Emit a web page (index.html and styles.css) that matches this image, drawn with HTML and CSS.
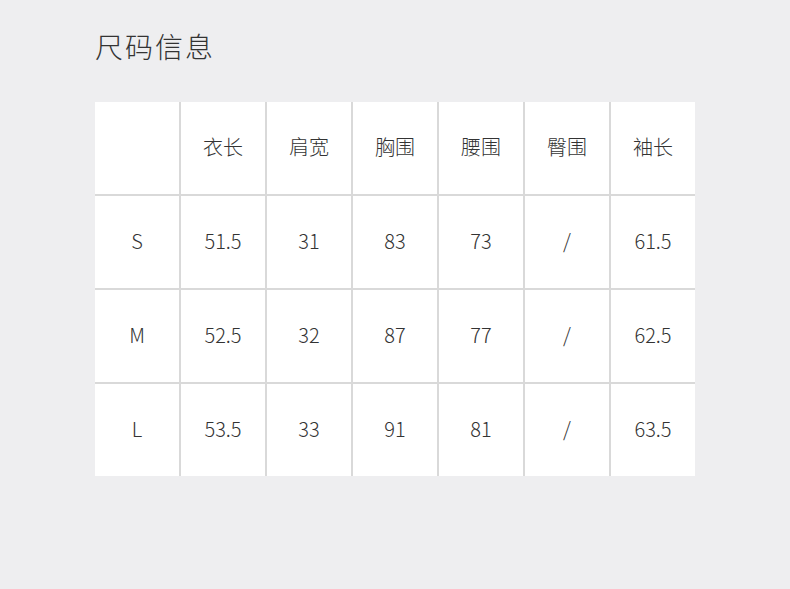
FILE: index.html
```html
<!DOCTYPE html>
<html lang="zh-CN">
<head>
<meta charset="utf-8">
<title>尺码信息</title>
<link rel="stylesheet" href="styles.css">
</head>
<body>
<div class="page">
  <h1 class="title">尺码信息</h1>
  <div class="size-table">
    <div class="cell"></div>
    <div class="cell">衣长</div>
    <div class="cell">肩宽</div>
    <div class="cell">胸围</div>
    <div class="cell">腰围</div>
    <div class="cell">臀围</div>
    <div class="cell">袖长</div>

    <div class="cell">S</div>
    <div class="cell">51.5</div>
    <div class="cell">31</div>
    <div class="cell">83</div>
    <div class="cell">73</div>
    <div class="cell">/</div>
    <div class="cell">61.5</div>

    <div class="cell">M</div>
    <div class="cell">52.5</div>
    <div class="cell">32</div>
    <div class="cell">87</div>
    <div class="cell">77</div>
    <div class="cell">/</div>
    <div class="cell">62.5</div>

    <div class="cell">L</div>
    <div class="cell">53.5</div>
    <div class="cell">33</div>
    <div class="cell">91</div>
    <div class="cell">81</div>
    <div class="cell">/</div>
    <div class="cell">63.5</div>
  </div>
</div>
</body>
</html>
```
FILE: styles.css
```css
html, body {
  margin: 0;
  padding: 0;
  background: #eeeef0;
}
body {
  font-family: "Noto Sans CJK SC", "Noto Sans", sans-serif;
  color: #333333;
}
.page {
  padding: 26px 0 0 95px;
}
.title {
  margin: 0;
  font-size: 28px;
  font-weight: 300;
  line-height: 40px;
  letter-spacing: 2px;
  color: #333333;
}
.size-table {
  margin-top: 36px;
  width: 600px;
  display: grid;
  grid-template-columns: repeat(7, 84px);
  grid-auto-rows: 92px;
  gap: 2px;
  background: #d9d9d9;
}
.cell {
  background: #ffffff;
  display: flex;
  align-items: center;
  justify-content: center;
  padding-bottom: 3px;
  font-size: 20px;
  font-weight: 300;
  color: #333333;
}
```
